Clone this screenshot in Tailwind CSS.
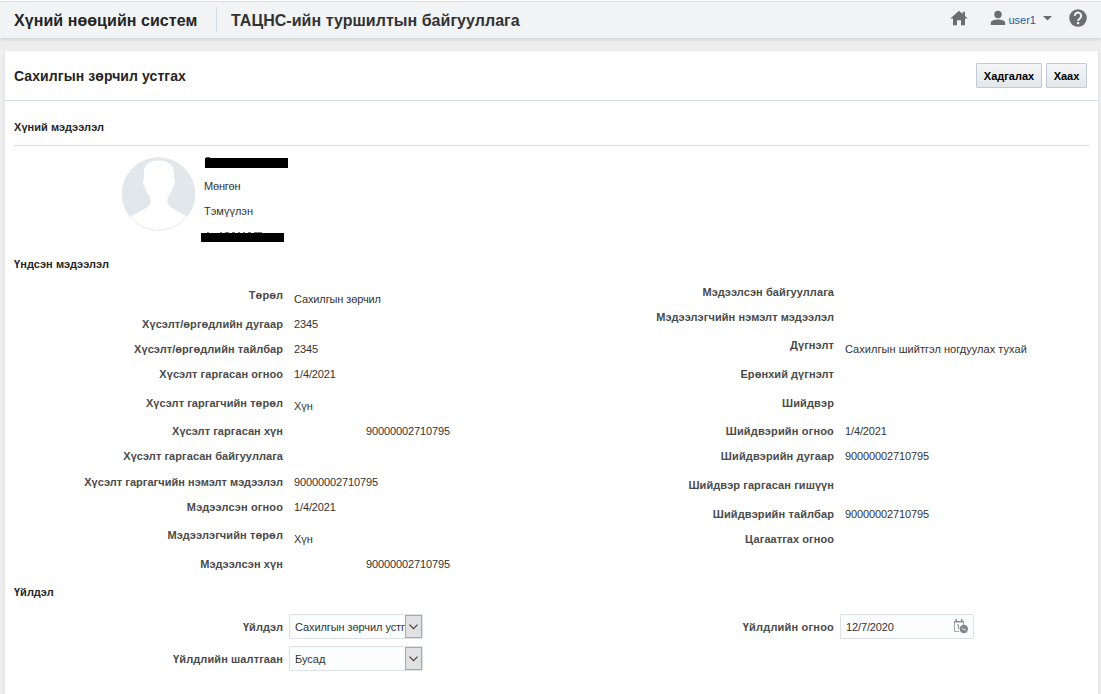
<!DOCTYPE html>
<html lang="mn">
<head>
<meta charset="utf-8">
<title>Хүний нөөцийн систем</title>
<script src="https://cdn.jsdelivr.net/npm/@tailwindcss/browser@4"></script>
</head>
<body class="h-[694px] overflow-hidden bg-[#eeeeee] font-['Liberation_Sans',Arial,sans-serif] text-[11px] leading-[15px] text-[#333333]">
<div class="flex h-full flex-col">
  <header class="flex h-[38px] shrink-0 items-start border-t border-white bg-[#f2f3f5] shadow-[0_1px_4px_rgba(0,0,0,0.16)]">
    <div class="flex h-[37px] w-full items-start border-t border-[#d9dfe3]">
      <h1 class="ml-[14px] mt-[9px] w-[202px] whitespace-nowrap text-[16px] font-bold leading-[20px] tracking-[0.06px] text-[#252525]">Хүний нөөцийн систем</h1>
      <div class="mt-[5px] h-[25px] w-px bg-[#cfdae3]"></div>
      <h2 class="ml-[14px] mt-[9px] whitespace-nowrap text-[16px] font-bold leading-[20px] tracking-[0.04px] text-[#333333]">ТАЦНС-ийн туршилтын байгууллага</h2>
      <div class="ml-auto mr-[14px] mt-[6px] flex h-[20px] items-center">
        <svg class="mr-[22px] h-[18px] w-[18px]" viewBox="0 0 18 18" fill="#6a6e70"><path d="M9 1.700.3 9.600H3V16.300h4v-5h4v5h4V9.600h2.700L15 7.100V2.700h-2.300v2.400z"/></svg>
        <svg class="h-[16px] w-[16px]" viewBox="0 0 16 16" fill="#6a6e70"><circle cx="8" cy="4.500" r="3.700"/><path d="M.8 14.900v-2.200C.8 10.200 5 9.400 8 9.400s7.200.8 7.200 3.300v2.200z"/></svg>
        <span class="ml-[2px] mt-[4px] text-[#1a5ba8]">user1</span>
        <svg class="ml-[7px] h-[5px] w-[9px]" viewBox="0 0 9 5" fill="#6a6e70"><path d="M0 0h9L4.500 4.500z"/></svg>
        <svg class="ml-[17px] h-[18px] w-[18px]" viewBox="0 0 18 18"><circle cx="9" cy="9" r="8.800" fill="#6a6e70"/><path d="M5.800 6.900a3.200 3.200 0 1 1 5.300 2.300C9.800 10.200 9.100 10.600 9.100 12" fill="none" stroke="#f2f3f5" stroke-width="2"/><path d="M8 13h2.200v2.200H8z" fill="#f2f3f5"/></svg>
      </div>
    </div>
  </header>
  <main class="ml-[5px] mr-[3px] mt-[13px] flex grow flex-col bg-white shadow-[0_1px_4px_rgba(0,0,0,0.08)]">
    <div class="flex h-[50px] shrink-0 items-start border-b border-[#d5dde5] pl-[9px] pr-[11px]">
      <h3 class="mt-[15px] whitespace-nowrap text-[14px] font-bold leading-[20px] tracking-[0.08px] text-[#252525]">Сахилгын зөрчил устгах</h3>
      <div class="ml-auto mt-[12px] flex gap-1">
        <button class="h-[25px] w-[66px] rounded-[1px] border border-[#c0cbd5] bg-linear-to-b from-[#f4f5f7] to-[#e3e7ea] pt-[2px] font-bold text-black">Хадгалах</button>
        <button class="h-[25px] w-[41px] rounded-[1px] border border-[#c0cbd5] bg-linear-to-b from-[#f4f5f7] to-[#e3e7ea] pt-[2px] font-bold text-black">Хаах</button>
      </div>
    </div>
    <section class="ml-[9px] mr-[9px] h-[45px] shrink-0 border-b border-[#d5dbe3] pt-[19px]">
      <h4 class="font-bold tracking-[0.06px] text-[#252525]">Хүний мэдээлэл</h4>
    </section>
    <div class="flex h-[111px] shrink-0 items-start pl-[117px]">
      <svg class="mt-[11px] h-[74px] w-[74px]" viewBox="0 0 74 74"><defs><clipPath id="disc"><circle cx="36.500" cy="37" r="36.500"/></clipPath></defs><circle cx="36.500" cy="37" r="36.500" fill="#e2e7ec"/><path clip-path="url(#disc)" d="M36.500 3.500C26 3.500 21.500 9 22 17v5c-1.500.5-1.200 5.500 1 8.500.8 3.500 2.500 6 4.500 8.500 1.500 3 1.800 7-.5 9.500C22 53.500 14 56 8 60v14h58V60c-6-4-14-6.500-19-11.500-2.300-2.500-2-6.500-.5-9.500 2-2.500 3.700-5 4.500-8.500 2.200-3 2.500-8 1-8.500v-5C52.500 9 47 3.500 36.500 3.500z" fill="#fff"/><circle cx="36.500" cy="37" r="36.200" fill="none" stroke="#e2e5ea" stroke-width=".8"/></svg>
      <div class="ml-[5px] mt-[11px] flex flex-col items-start">
        <div class="ml-[5px] h-px w-[4px] rounded-full bg-[#555555]"></div>
        <div class="ml-[4px] h-[10px] w-[83px] bg-black"></div>
        <span class="ml-[3px] mt-[11px] tracking-[-0.2px]">Мөнгөн</span>
        <span class="ml-[3px] mt-[10px]">Тэмүүлэн</span>
        <div class="ml-[6px] mt-[13px] flex h-px gap-[3px]"><i class="mr-[8px] w-[2px] bg-[#777777]"></i><i class="w-[2px] bg-[#777777]"></i><i class="w-[4px] bg-[#777777]"></i><i class="w-[3px] bg-[#777777]"></i><i class="w-[2px] bg-[#777777]"></i><i class="w-[2px] bg-[#777777]"></i><i class="w-[3px] bg-[#777777]"></i><i class="w-[8px] bg-[#777777]"></i></div>
        <div class="h-[9px] w-[83px] bg-black"></div>
      </div>
    </div>
    <h4 class="ml-[9px] h-[31px] shrink-0 font-bold tracking-[0.06px] text-[#252525]">Үндсэн мэдээлэл</h4>
    <div class="flex h-[297px] shrink-0">
      <dl class="w-[551px]">
        <div class="flex h-[29px]"><dt class="w-[278px] text-right font-bold tracking-[0.06px] text-[#4a4a4a]">Төрөл</dt><dd class="ml-[11px] pt-[4px] tracking-[-0.12px]">Сахилгын зөрчил</dd></div>
        <div class="flex h-[25px]"><dt class="w-[278px] text-right font-bold tracking-[0.06px] text-[#4a4a4a]">Хүсэлт/өргөдлийн дугаар</dt><dd class="ml-[11px] tracking-[-0.12px]">2345</dd></div>
        <div class="flex h-[25px]"><dt class="w-[278px] text-right font-bold tracking-[0.06px] text-[#4a4a4a]">Хүсэлт/өргөдлийн тайлбар</dt><dd class="ml-[11px] tracking-[-0.12px]">2345</dd></div>
        <div class="flex h-[29px]"><dt class="w-[278px] text-right font-bold tracking-[0.06px] text-[#4a4a4a]">Хүсэлт гаргасан огноо</dt><dd class="ml-[11px] tracking-[-0.12px]">1/4/2021</dd></div>
        <div class="flex h-[28px]"><dt class="w-[278px] text-right font-bold tracking-[0.06px] text-[#4a4a4a]">Хүсэлт гаргагчийн төрөл</dt><dd class="ml-[11px] pt-[3px]">Хүн</dd></div>
        <div class="flex h-[25px]"><dt class="w-[278px] text-right font-bold tracking-[0.06px] text-[#4a4a4a]">Хүсэлт гаргасан хүн</dt><dd class="ml-[83px] tracking-[-0.12px]">90000002710795</dd></div>
        <div class="flex h-[26px]"><dt class="w-[278px] text-right font-bold tracking-[0.06px] text-[#4a4a4a]">Хүсэлт гаргасан байгууллага</dt></div>
        <div class="flex h-[25px]"><dt class="w-[278px] text-right font-bold tracking-[0.04px] text-[#4a4a4a]">Хүсэлт гаргагчийн нэмэлт мэдээлэл</dt><dd class="ml-[11px] tracking-[-0.12px]">90000002710795</dd></div>
        <div class="flex h-[28px]"><dt class="w-[278px] text-right font-bold tracking-[0.14px] text-[#4a4a4a]">Мэдээлсэн огноо</dt><dd class="ml-[11px] tracking-[-0.12px]">1/4/2021</dd></div>
        <div class="flex h-[29px]"><dt class="w-[278px] text-right font-bold tracking-[0.1px] text-[#4a4a4a]">Мэдээлэгчийн төрөл</dt><dd class="ml-[11px] pt-[4px]">Хүн</dd></div>
        <div class="flex h-[25px]"><dt class="w-[278px] text-right font-bold tracking-[0.1px] text-[#4a4a4a]">Мэдээлсэн хүн</dt><dd class="ml-[83px] tracking-[-0.12px]">90000002710795</dd></div>
      </dl>
      <dl class="-mt-[3px]">
        <div class="flex h-[25px]"><dt class="w-[278px] text-right font-bold tracking-[0.08px] text-[#4a4a4a]">Мэдээлсэн байгууллага</dt></div>
        <div class="flex h-[28px]"><dt class="w-[278px] text-right font-bold tracking-[0.08px] text-[#4a4a4a]">Мэдээлэгчийн нэмэлт мэдээлэл</dt></div>
        <div class="flex h-[29px]"><dt class="w-[278px] text-right font-bold tracking-[0.08px] text-[#4a4a4a]">Дүгнэлт</dt><dd class="ml-[11px] pt-[4px] tracking-[0.04px]">Сахилгын шийтгэл ногдуулах тухай</dd></div>
        <div class="flex h-[29px]"><dt class="w-[278px] text-right font-bold tracking-[0.06px] text-[#4a4a4a]">Ерөнхий дүгнэлт</dt></div>
        <div class="flex h-[28px]"><dt class="w-[278px] text-right font-bold tracking-[0.12px] text-[#4a4a4a]">Шийдвэр</dt></div>
        <div class="flex h-[25px]"><dt class="w-[278px] text-right font-bold tracking-[0.16px] text-[#4a4a4a]">Шийдвэрийн огноо</dt><dd class="ml-[11px] tracking-[-0.12px]">1/4/2021</dd></div>
        <div class="flex h-[29px]"><dt class="w-[278px] text-right font-bold tracking-[0.12px] text-[#4a4a4a]">Шийдвэрийн дугаар</dt><dd class="ml-[11px] tracking-[-0.12px]">90000002710795</dd></div>
        <div class="flex h-[29px]"><dt class="w-[278px] text-right font-bold tracking-[0.08px] text-[#4a4a4a]">Шийдвэр гаргасан гишүүн</dt></div>
        <div class="flex h-[25px]"><dt class="w-[278px] text-right font-bold tracking-[0.12px] text-[#4a4a4a]">Шийдвэрийн тайлбар</dt><dd class="ml-[11px] tracking-[-0.12px]">90000002710795</dd></div>
        <div class="flex h-[25px]"><dt class="w-[278px] text-right font-bold tracking-[0.06px] text-[#4a4a4a]">Цагаатгах огноо</dt></div>
      </dl>
    </div>
    <h4 class="ml-[9px] h-[29px] shrink-0 font-bold text-[#252525]">Үйлдэл</h4>
    <div class="flex">
      <div class="flex w-[551px] flex-col gap-[7px]">
        <div class="flex h-[25px]"><span class="w-[278px] pt-[6px] text-right font-bold tracking-[0.08px] text-[#4a4a4a]">Үйлдэл</span>
          <div class="ml-[6px] flex w-[134px] rounded-[1px] border border-[#dce2e7] bg-[#fcfdfe]"><span class="w-[115px] overflow-hidden whitespace-nowrap pl-[5px] pt-[5px] tracking-[-0.08px]">Сахилгын зөрчил устгах</span><span class="flex w-[17px] items-center justify-center border border-[#a5aaaa] bg-[#e1e1e1]"><svg class="h-[6px] w-[9px]" viewBox="0 0 9 6" fill="none" stroke="#404040" stroke-width="1.200"><path d="M.5.700l4 4 4-4"/></svg></span></div></div>
        <div class="flex h-[25px]"><span class="w-[278px] pt-[6px] text-right font-bold tracking-[0.1px] text-[#4a4a4a]">Үйлдлийн шалтгаан</span>
          <div class="ml-[6px] flex w-[134px] rounded-[1px] border border-[#dce2e7] bg-[#fcfdfe]"><span class="w-[115px] overflow-hidden whitespace-nowrap pl-[5px] pt-[5px]">Бусад</span><span class="flex w-[17px] items-center justify-center border border-[#a5aaaa] bg-[#e1e1e1]"><svg class="h-[6px] w-[9px]" viewBox="0 0 9 6" fill="none" stroke="#404040" stroke-width="1.200"><path d="M.5.700l4 4 4-4"/></svg></span></div></div>
      </div>
      <div class="flex h-[25px]"><span class="w-[278px] pt-[6px] text-right font-bold tracking-[0.2px] text-[#4a4a4a]">Үйлдлийн огноо</span>
        <div class="ml-[6px] flex w-[134px] justify-between rounded-[1px] border border-[#dce2e7] bg-[#fcfdfe] pl-[5px] pr-[4px] pt-[4px]"><span class="pt-px tracking-[-0.12px]">12/7/2020</span><svg class="h-[16px] w-[16px]" viewBox="0 0 16 16"><path d="M1.500 3v9.500H6M10.500 3v3" fill="none" stroke="#a4a8ab"/><path d="M1 2h10v1.500H1zM2.500 0H4v3H2.500zM8 0h1.500v3H8zM4 5.500h2V10H5V6.500H4z" fill="#8b8f92"/><circle cx="10.800" cy="10" r="4.200" fill="#84888c"/><path d="M8.800 9.200l2 1.300 2 .3" stroke="#fff" stroke-width=".8" fill="none"/></svg></div></div>
    </div>
  </main>
</div>
</body>
</html>
